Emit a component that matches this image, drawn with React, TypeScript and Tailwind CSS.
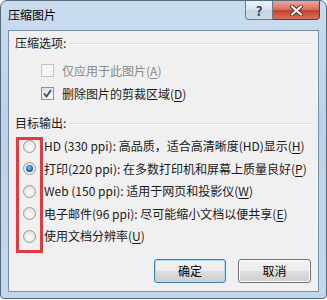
import React from "react";

const FONT = { fontFamily: '"Noto Sans CJK SC", "Noto Sans", sans-serif' };

function Key({ k }: { k: string }) {
  return (
    <>
      (<span className="underline underline-offset-[2px]">{k}</span>)
    </>
  );
}

function GroupHeader({ text }: { text: string }) {
  return (
    <div className="flex h-[16px] items-center gap-[4px]">
      <span className="whitespace-nowrap">{text}</span>
      <div className="mt-[2px] flex-1 border-t border-[#d5dfe5] border-b border-b-white" />
    </div>
  );
}

function CheckBox({ checked, disabled }: { checked?: boolean; disabled?: boolean }) {
  return (
    <div
      className={
        "flex h-[13px] w-[13px] items-center justify-center border " +
        (disabled
          ? "border-[#c4c4c4] bg-[#f6f6f6]"
          : "border-[#8e8f8f] bg-[linear-gradient(135deg,#dcdcdc,#ffffff)]")
      }
    >
      {checked && (
        <svg width="9" height="9" viewBox="0 0 9 9">
          <path d="M1 4.5 L3.5 7.5 L8 1" stroke="#2a4b8d" strokeWidth="1.8" fill="none" />
        </svg>
      )}
    </div>
  );
}

function Radio({ checked }: { checked?: boolean }) {
  return (
    <div className="flex h-[13px] w-[13px] items-center justify-center rounded-full border border-[#9a9a9a] bg-[radial-gradient(circle_at_50%_60%,#ffffff,#d6d6d6)]">
      {checked && (
        <div className="h-[7px] w-[7px] rounded-full bg-[radial-gradient(circle_at_45%_40%,#7fd0f5,#1a6aa4_55%,#0d3f66)]" />
      )}
    </div>
  );
}

const radios: { label: React.ReactNode; checked?: boolean }[] = [
  { label: <>HD (330 ppi): 高品质，适合高清晰度(HD)显示<Key k="H" /></> },
  { label: <>打印(220 ppi): 在多数打印机和屏幕上质量良好<Key k="P" /></>, checked: true },
  { label: <>Web (150 ppi): 适用于网页和投影仪<Key k="W" /></> },
  { label: <>电子邮件(96 ppi): 尽可能缩小文档以便共享<Key k="E" /></> },
  { label: <>使用文档分辨率<Key k="U" /></> },
];

export default function App() {
  return (
    <div className="relative h-[300px] w-[327px] overflow-hidden bg-white" style={FONT}>
      <div className="flex h-[299px] w-[327px] flex-col rounded-t-[7px] rounded-b-[4px] border border-[#56687c] bg-[linear-gradient(180deg,#c9dcef_0%,#bcd2ea_40%,#c3d7ec_100%)]">
        <div className="flex h-[29px] items-start justify-between">
          <span className="ml-[7px] mt-[6px] text-[12px] leading-[16px] text-black">压缩图片</span>
          <div className="mr-[6px] flex">
            <div className="flex h-[19px] w-[28px] items-center justify-center rounded-bl-[4px] border border-t-0 border-[#6b7c8f] bg-[linear-gradient(180deg,#edf2f8_0%,#d9e3ee_50%,#c4d2e2_51%,#cfdbe8_100%)] text-[13px] font-bold leading-none text-[#3b4552]">
              ?
            </div>
            <div className="flex h-[19px] w-[47px] items-center justify-center rounded-br-[4px] border border-l-0 border-t-0 border-[#6b3a35] bg-[linear-gradient(180deg,#e8a89c_0%,#d66a5a_50%,#c2412f_51%,#d8705c_100%)]">
              <svg width="13" height="11" viewBox="0 0 13 11">
                <path d="M2 1.5 L11 9.5 M11 1.5 L2 9.5" stroke="#5a2a24" strokeWidth="4" strokeLinecap="round" />
                <path d="M2 1.5 L11 9.5 M11 1.5 L2 9.5" stroke="#ffffff" strokeWidth="2.2" strokeLinecap="round" />
              </svg>
            </div>
          </div>
        </div>
        <div className="mx-[7px] flex h-[262px] flex-col border border-[#7d8fa3] bg-[#f0f0f0] pl-[6px] pr-[6px] pt-[4px] text-[12px] leading-[16px] text-[#1a1a1a]">
          <GroupHeader text="压缩选项:" />
          <div className="mt-[8px] flex h-[23px] items-center gap-[8px] pl-[26px] text-[#8a8a8a]">
            <CheckBox disabled />
            <span>仅应用于此图片<Key k="A" /></span>
          </div>
          <div className="flex h-[23px] items-center gap-[8px] pl-[26px]">
            <CheckBox checked />
            <span>删除图片的剪裁区域<Key k="D" /></span>
          </div>
          <div className="mt-[10px]">
            <GroupHeader text="目标输出:" />
          </div>
          <div className="mt-[4px] flex flex-col">
            {radios.map((r, i) => (
              <div key={i} className="flex h-[22.5px] items-center gap-[8px] pl-[8px]">
                <Radio checked={r.checked} />
                <span className="whitespace-nowrap">{r.label}</span>
              </div>
            ))}
          </div>
          <div className="mt-[11px] flex justify-end gap-[12px] pr-[1px]">
            <button className="h-[24px] w-[72px] rounded-[3px] border border-[#3c7fb1] bg-[linear-gradient(180deg,#f2f2f2_0%,#ebebeb_50%,#dddddd_51%,#cfcfcf_100%)] text-[12px] text-black shadow-[inset_0_0_0_1px_#a8dcf5]">
              确定
            </button>
            <button className="h-[24px] w-[73px] rounded-[3px] border border-[#707070] bg-[linear-gradient(180deg,#f2f2f2_0%,#ebebeb_50%,#dddddd_51%,#cfcfcf_100%)] text-[12px] text-black shadow-[inset_0_0_0_1px_#fcfcfc]">
              取消
            </button>
          </div>
        </div>
      </div>
      <div className="absolute left-[16px] top-[137px] h-[116px] w-[27px] border-[3px] border-[#e23a3f]" />
    </div>
  );
}
